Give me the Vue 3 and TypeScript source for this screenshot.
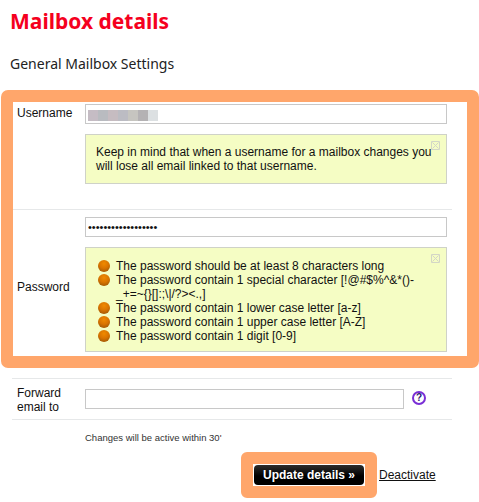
<script setup lang="ts">
const blurBlocks = [
  { width: 10, color: '#c5bcc4' },
  { width: 10, color: '#b9bbc0' },
  { width: 10, color: '#c6bcc1' },
  { width: 10, color: '#bcbcc3' },
  { width: 10, color: '#c6c5c0' },
  { width: 10, color: '#b4b2b4' },
  { width: 10, color: '#dce0e2' },
]

const passwordRules = [
  'The password should be at least 8 characters long',
  'The password contain 1 special character [!@#$%^&*()-_+=~{}[]:;\\|/?><.,]',
  'The password contain 1 lower case letter [a-z]',
  'The password contain 1 upper case letter [A-Z]',
  'The password contain 1 digit [0-9]',
]
</script>

<template>
  <div class="page">
    <h1 class="title">Mailbox details</h1>
    <h2 class="subtitle">General Mailbox Settings</h2>

    <div class="highlight">
      <div class="row row-username">
        <div class="label">Username</div>
        <div class="cell">
          <div class="field blurred">
            <span
              v-for="(block, index) in blurBlocks"
              :key="index"
              :style="{ width: block.width + 'px', background: block.color }"
            ></span>
          </div>
          <div class="notice notice-short">
            <svg class="close" viewBox="0 0 9 9" aria-hidden="true">
              <path d="M.5.5h8v8h-8zM1.5 1.5l6 6M7.5 1.5l-6 6" />
            </svg>
            Keep in mind that when a username for a mailbox changes you will lose all email linked to that username.
          </div>
        </div>
      </div>

      <div class="row row-password">
        <div class="label label-password">Password</div>
        <div class="cell">
          <input class="field" type="password" value="abcdefghijklmnopqr" aria-label="Password" />
          <div class="notice notice-rules">
            <svg class="close" viewBox="0 0 9 9" aria-hidden="true">
              <path d="M.5.5h8v8h-8zM1.5 1.5l6 6M7.5 1.5l-6 6" />
            </svg>
            <ul class="rules">
              <li v-for="rule in passwordRules" :key="rule">
                <span class="ball"></span>
                <span class="rule-text">{{ rule }}</span>
              </li>
            </ul>
          </div>
        </div>
      </div>
    </div>

    <div class="row row-forward">
      <div class="label">Forward email to</div>
      <div class="cell forward-cell">
        <input class="field forward-input" type="text" aria-label="Forward email to" />
        <span class="help">?</span>
      </div>
    </div>

    <p class="hint">Changes will be active within 30'</p>

    <div class="actions">
      <div class="button-mark">
        <button class="update" type="button">Update details »</button>
      </div>
      <a class="deactivate" href="#">Deactivate</a>
    </div>
  </div>
</template>

<style scoped>
.page {
  position: relative;
  width: 479px;
  height: 502px;
  overflow: hidden;
  padding: 8px 0 0 1px;
  box-sizing: border-box;
  color: #111;
  font: 400 12px/14px 'Liberation Sans', Arial, sans-serif;
}

.title {
  margin: 0 0 0 9px;
  color: #f5001e;
  font: 700 21px/26px 'Noto Sans', sans-serif;
}

.subtitle {
  margin: 20px 0 0 9px;
  color: #222;
  font: 400 14px/20px 'Noto Sans', sans-serif;
}

.highlight {
  width: 478px;
  height: 278px;
  margin-top: 16px;
  border: 12px solid #ffa66b;
  border-radius: 7px;
  box-sizing: border-box;
}

.row {
  display: flex;
  gap: 2px;
}

.label {
  box-sizing: border-box;
  width: 65px;
  padding: 2px 0 0 4px;
  flex: none;
}

.cell {
  box-sizing: border-box;
  width: 372px;
  padding: 0 5px;
}

.row-username {
  height: 108px;
  padding-top: 2px;
  box-sizing: border-box;
  background: linear-gradient(#e6e8e9, #e6e8e9) 0 100% / 439px 1px no-repeat;
}

.row-password {
  height: 146px;
  padding-top: 7px;
  box-sizing: border-box;
}

.label-password {
  padding-top: 63px;
}

.field {
  display: block;
  box-sizing: border-box;
  width: 362px;
  height: 20px;
  margin: 0;
  padding: 0 2px;
  border: 1px solid #c8c8c8;
  border-radius: 0;
  background: #fff;
  color: #111;
  outline: none;
  font: 400 11px/18px 'Liberation Sans', Arial, sans-serif;
}

.blurred {
  display: flex;
  padding: 5px 0 0 2px;
}

.blurred span {
  height: 11px;
}

.notice {
  position: relative;
  box-sizing: border-box;
  width: 362px;
  margin-top: 10px;
  border: 1px solid #cfd2c8;
  background: #f5fdc4;
}

.notice-short {
  height: 50px;
  padding: 10px 10px 0;
}

.notice-rules {
  height: 105px;
  padding: 11px 10px 0 12px;
}

.close {
  position: absolute;
  top: 6px;
  right: 6px;
  width: 9px;
  height: 9px;
  fill: none;
  stroke: #d3d6c6;
  stroke-width: 1;
}

.rules {
  margin: 0;
  padding: 0;
  list-style: none;
}

.rules li {
  display: flex;
  gap: 6px;
}

.ball {
  width: 12px;
  height: 12px;
  margin-top: 1px;
  flex: none;
  border-radius: 50%;
  background: radial-gradient(circle at 50% 30%, #f08a00 0, #d97400 45%, #8c4d06 100%);
}

.rule-text {
  width: 325px;
  overflow-wrap: anywhere;
}

.row-forward {
  width: 440px;
  height: 42px;
  margin: 10px 0 0 11px;
  border-top: 1px solid #e6e8e9;
  border-bottom: 1px solid #e6e8e9;
  box-sizing: border-box;
}

.row-forward .label {
  width: 66px;
  padding: 7px 0 0 5px;
}

.forward-cell {
  display: flex;
  align-items: flex-start;
  padding-top: 10px;
}

.forward-input {
  width: 319px;
}

.help {
  display: flex;
  align-items: center;
  justify-content: center;
  box-sizing: border-box;
  width: 14px;
  height: 14px;
  margin: 2px 0 0 8px;
  border: 2px solid #7a2fd6;
  border-radius: 50%;
  color: #2a1a70;
  font: 700 10px/10px 'Liberation Sans', Arial, sans-serif;
}

.hint {
  margin: 11px 0 0 84px;
  color: #333;
  font-size: 9.5px;
  line-height: 14px;
}

.actions {
  display: flex;
  align-items: center;
  margin: 7px 0 0 240px;
}

.button-mark {
  box-sizing: border-box;
  width: 136px;
  height: 46px;
  border: 12px solid #ffa66b;
  border-radius: 6px;
  background: #fff;
  padding: 1px;
  background-clip: padding-box;
}

.update {
  display: block;
  width: 110px;
  height: 20px;
  padding: 0;
  border: 0;
  border-radius: 4px;
  background: linear-gradient(#2d2d2d, #000 55%);
  color: #fff;
  font: 700 12px/20px 'Liberation Sans', Arial, sans-serif;
}

.deactivate {
  margin-left: 2px;
  color: #111;
  font-size: 12px;
}
</style>
